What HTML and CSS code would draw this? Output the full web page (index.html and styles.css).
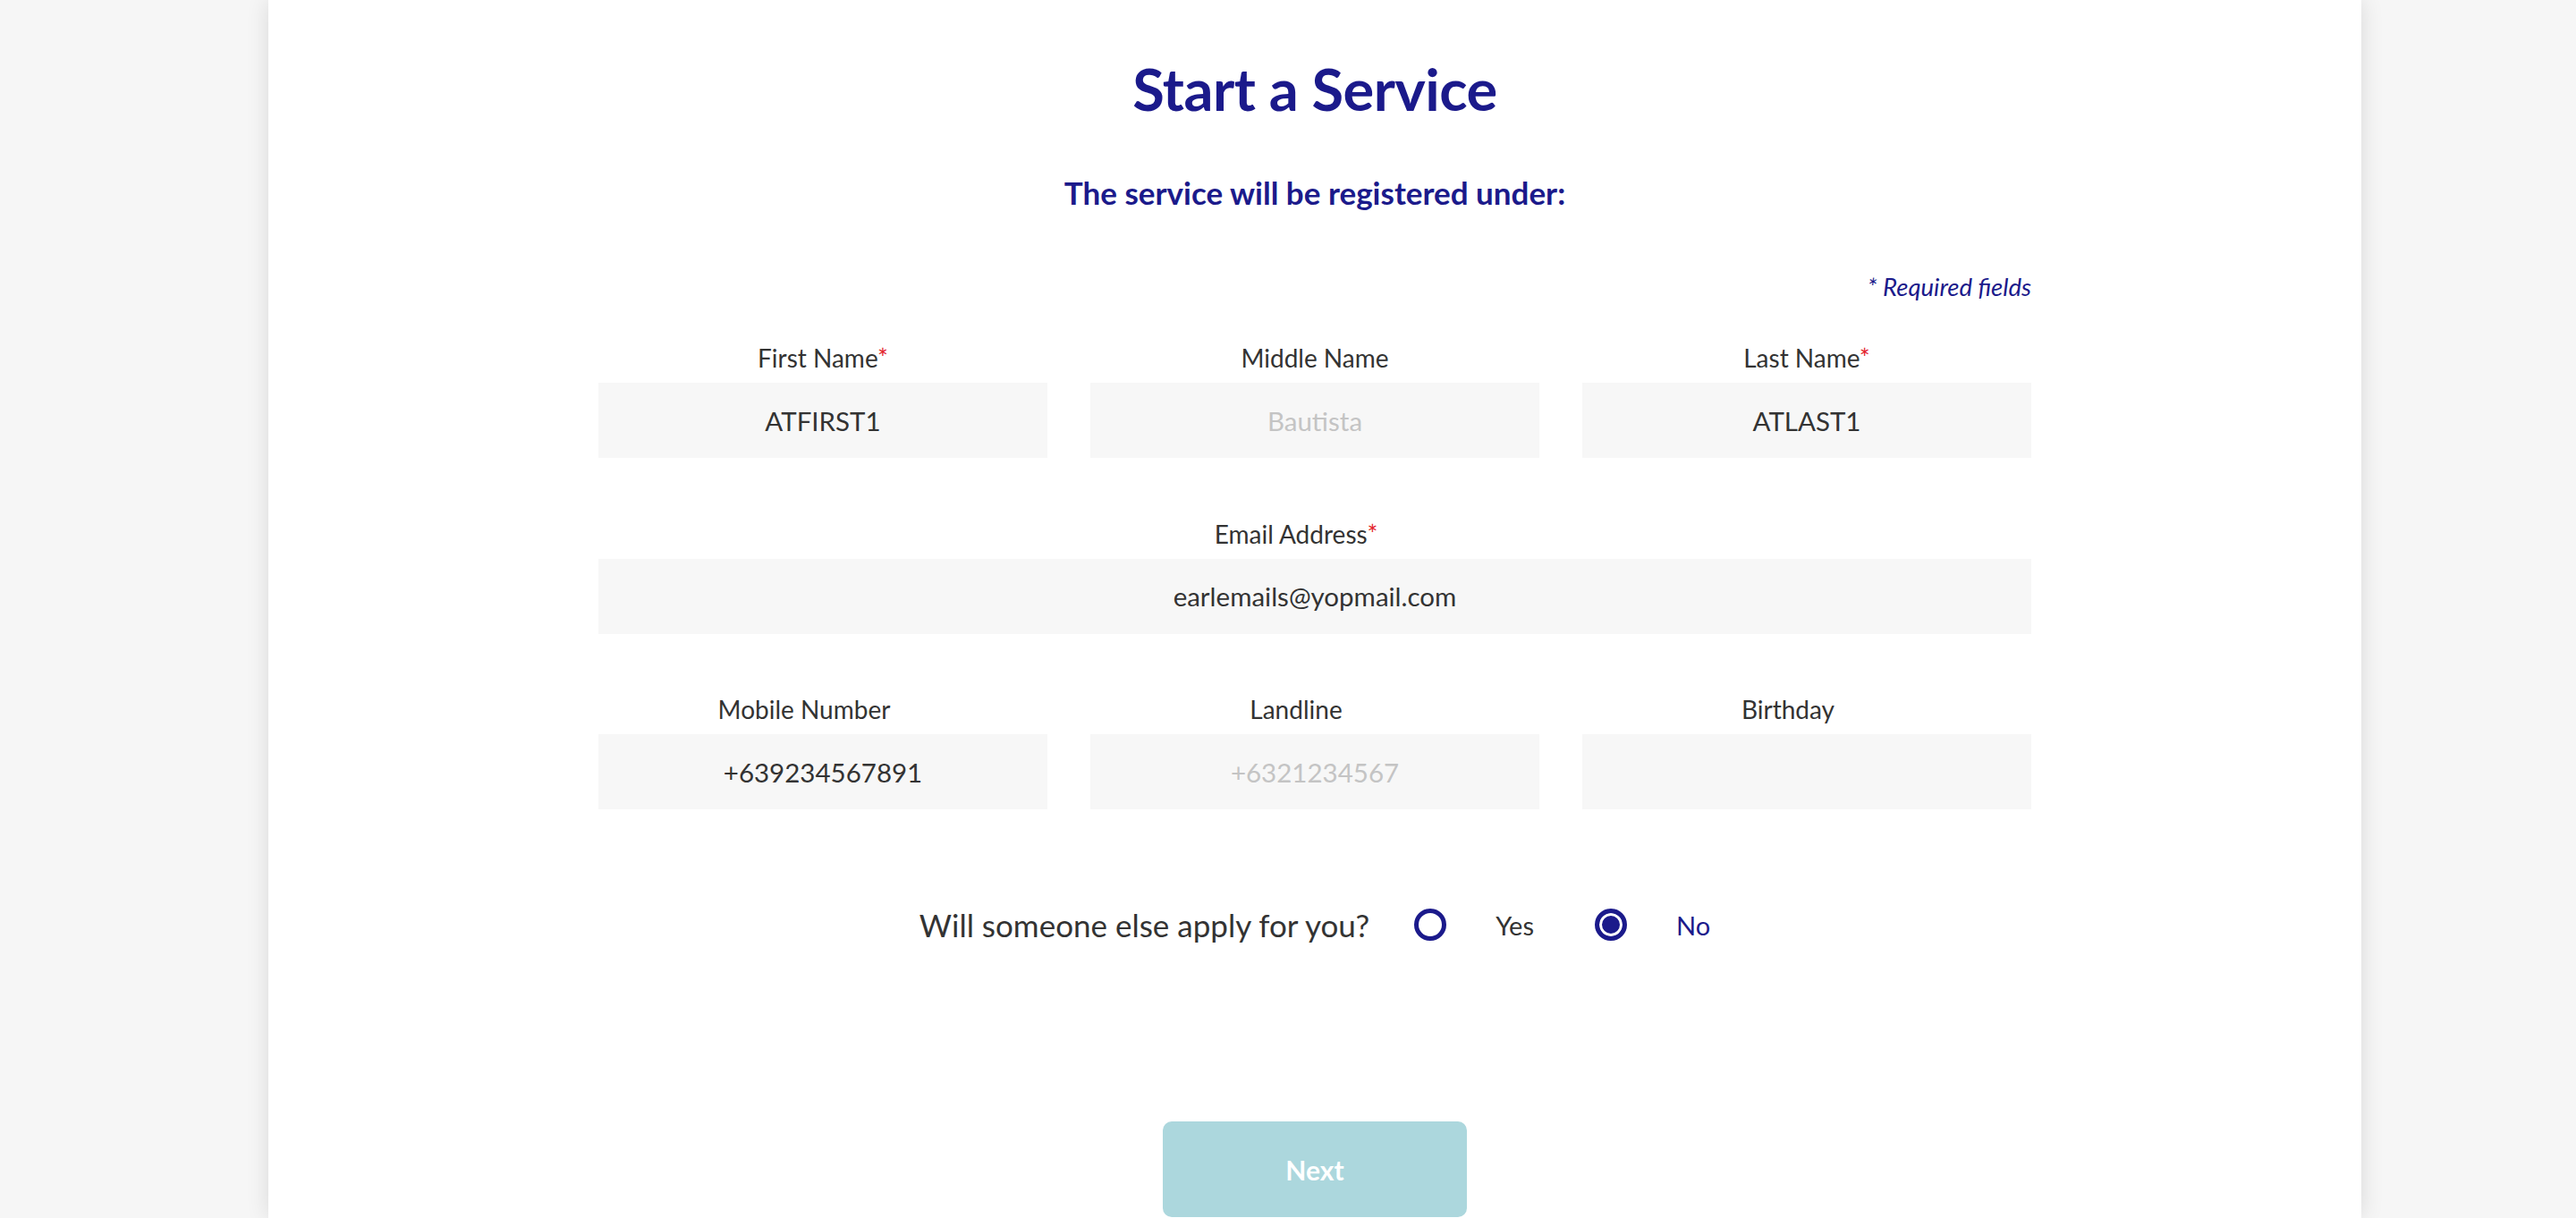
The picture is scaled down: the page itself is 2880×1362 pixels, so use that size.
FILE: index.html
```html
<!DOCTYPE html>
<html lang="en">
<head>
<meta charset="utf-8">
<title>Start a Service</title>
<link rel="stylesheet" href="styles.css">
</head>
<body>
<div class="page">
  <main class="card">
    <h1 class="title">Start a Service</h1>
    <p class="subtitle">The service will be registered under:</p>
    <form class="form">
      <p class="required-note">* Required fields</p>
      <div class="row row-three">
        <div class="field">
          <label class="label">First Name<span class="req">*</span></label>
          <input class="input" type="text" value="ATFIRST1">
        </div>
        <div class="field">
          <label class="label">Middle Name</label>
          <input class="input" type="text" placeholder="Bautista">
        </div>
        <div class="field">
          <label class="label">Last Name<span class="req">*</span></label>
          <input class="input" type="text" value="ATLAST1">
        </div>
      </div>
      <div class="row row-one">
        <div class="field">
          <label class="label label-offset">Email Address<span class="req">*</span></label>
          <input class="input" type="text" value="earlemails@yopmail.com">
        </div>
      </div>
      <div class="row row-three">
        <div class="field">
          <label class="label label-offset">Mobile Number</label>
          <input class="input" type="text" value="+639234567891">
        </div>
        <div class="field">
          <label class="label label-offset">Landline</label>
          <input class="input" type="text" placeholder="+6321234567">
        </div>
        <div class="field">
          <label class="label label-offset">Birthday</label>
          <input class="input" type="text">
        </div>
      </div>
      <div class="question">
        <span class="question-text">Will someone else apply for you?</span>
        <label class="option">
          <input class="radio" type="radio" name="apply">
          <span class="option-text">Yes</span>
        </label>
        <label class="option">
          <input class="radio" type="radio" name="apply" checked>
          <span class="option-text">No</span>
        </label>
      </div>
      <div class="actions">
        <button class="btn-next" type="button">Next</button>
      </div>
    </form>
  </main>
</div>
</body>
</html>
```
FILE: styles.css
```css
html, body {
  margin: 0;
  padding: 0;
}

body {
  background: #f6f6f6;
  font-family: "Lato", "Open Sans", sans-serif;
  color: #333333;
  overflow: hidden;
}

.page {
  display: flex;
  justify-content: center;
  padding-left: 60px;
  min-height: 1362px;
}

.card {
  width: 2340px;
  min-height: 1362px;
  box-sizing: border-box;
  background: #ffffff;
  box-shadow: 0 0 24px rgba(0, 0, 0, 0.12);
  padding-top: 59px;
}

.title {
  margin: 0;
  text-align: center;
  font-size: 65px;
  line-height: 80px;
  font-weight: 700;
  color: #1b1a8b;
  letter-spacing: -0.5px;
}

.subtitle {
  margin: 52px 0 0;
  text-align: center;
  font-size: 35px;
  line-height: 48px;
  font-weight: 700;
  color: #1b1a8b;
}

.form {
  width: 1602px;
  margin: 0 auto;
}

.required-note {
  margin: 64px 0 0;
  text-align: right;
  font-size: 27.5px;
  line-height: 36px;
  font-style: italic;
  color: #1b1a8b;
}

.row {
  display: grid;
  column-gap: 48px;
  margin-top: 68.5px;
}

.required-note + .row {
  margin-top: 45px;
}

.row-three {
  grid-template-columns: repeat(3, 1fr);
}

.row-one {
  grid-template-columns: 1fr;
}

.field {
  display: flex;
  flex-direction: column;
}

.label {
  display: block;
  text-align: center;
  font-size: 28px;
  line-height: 32px;
  margin-bottom: 12px;
  color: #333333;
}

.label-offset {
  padding-right: 42px;
}

.req {
  color: #e3232c;
}

.input {
  height: 84px;
  border: none;
  outline: none;
  background: #f7f7f7;
  text-align: center;
  font-family: "Lato", "Open Sans", sans-serif;
  font-size: 29.5px;
  color: #333333;
  padding: 0 16px;
  box-sizing: border-box;
  width: 100%;
}

.input::placeholder {
  color: #c4c4c4;
}

.question {
  display: flex;
  justify-content: center;
  align-items: center;
  margin-top: 104px;
  height: 50px;
}

.question-text {
  font-size: 35px;
  color: #333333;
  margin-right: 50px;
}

.option {
  display: flex;
  align-items: center;
  margin-right: 68px;
}

.option:last-child {
  margin-right: 0;
}

.radio {
  appearance: none;
  -webkit-appearance: none;
  width: 36px;
  height: 36px;
  margin: 0 55px 0 0;
  box-sizing: border-box;
  border: 5px solid #1b1a8b;
  border-radius: 50%;
  background: #ffffff;
}

.radio:checked {
  background: #1b1a8b;
  box-shadow: inset 0 0 0 3px #ffffff;
}

.option-text {
  font-size: 29px;
  color: #333333;
}

.radio:checked + .option-text {
  color: #1b1a8b;
}

.actions {
  display: flex;
  justify-content: center;
  margin-top: 195px;
}

.btn-next {
  width: 340px;
  height: 107px;
  border: none;
  border-radius: 10px;
  background: #acd7dd;
  color: #ffffff;
  font-family: "Lato", "Open Sans", sans-serif;
  font-size: 30px;
  font-weight: 700;
}
```
